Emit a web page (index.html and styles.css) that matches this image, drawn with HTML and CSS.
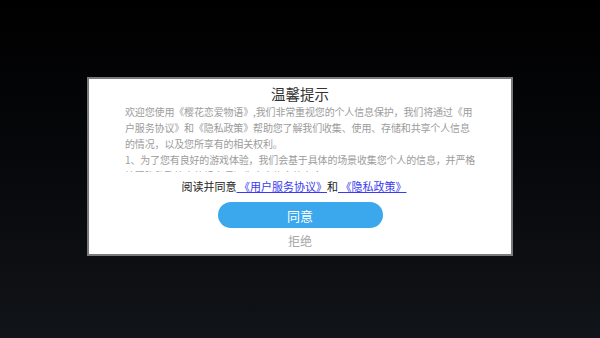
FILE: index.html
```html
<!DOCTYPE html>
<html lang="zh-CN">
<head>
<meta charset="utf-8">
<title>温馨提示</title>
<link rel="stylesheet" href="styles.css">
</head>
<body>
<div class="dialog">
  <div class="title">温馨提示</div>
  <div class="content">
    <p class="para">欢迎您使用《樱花恋爱物语》,我们非常重视您的个人信息保护，我们将通过《用<br>户服务协议》和《隐私政策》帮助您了解我们收集、使用、存储和共享个人信息<br>的情况，以及您所享有的相关权利。</p>
    <p class="para">1、为了您有良好的游戏体验，我们会基于具体的场景收集您个人的信息，并严格<br>按照隐私政策中的规定保证您个人信息的安全。</p>
  </div>
  <div class="agree">阅读并同意<a class="link" href="#"> 《用户服务协议》</a>和<a class="link" href="#"> 《隐私政策》</a></div>
  <button class="btn-ok">同意</button>
  <div class="refuse">拒绝</div>
</div>
</body>
</html>
```
FILE: styles.css
```css
html, body {
  margin: 0;
  padding: 0;
}
body {
  width: 600px;
  height: 338px;
  overflow: hidden;
  background: linear-gradient(to bottom, #000000 0%, #06070a 45%, #111418 100%);
  display: flex;
  justify-content: center;
  align-items: flex-start;
  padding-top: 77px;
  box-sizing: border-box;
  font-family: "Noto Sans CJK SC", "Noto Sans", sans-serif;
}
.dialog {
  width: 426px;
  height: 179px;
  box-sizing: border-box;
  background: #ffffff;
  border: 2px solid #7a7a7a;
  display: flex;
  flex-direction: column;
  align-items: center;
}
.title {
  margin-top: 5px;
  font-size: 14.5px;
  line-height: 20px;
  color: #333333;
}
.content {
  align-self: flex-start;
  margin-left: 36px;
  height: 68px;
  overflow: hidden;
}
.para {
  margin: 0;
  font-size: 10px;
  line-height: 16px;
  color: #9c9c9c;
  white-space: nowrap;
  letter-spacing: -0.15px;
}
.agree {
  margin-top: 6px;
  margin-right: 12px;
  font-size: 11px;
  line-height: 17px;
  color: #222222;
  white-space: pre;
}
.link {
  color: #3a3aee;
  text-decoration: underline;
}
.btn-ok {
  margin-top: 7px;
  width: 165px;
  height: 26px;
  border: none;
  border-radius: 13px;
  background: #3ba8ee;
  color: #ffffff;
  font-family: "Noto Sans CJK SC", sans-serif;
  font-size: 13px;
  padding: 0;
}
.refuse {
  margin-top: 5px;
  font-size: 12px;
  line-height: 16px;
  color: #a6a6a6;
}
```
